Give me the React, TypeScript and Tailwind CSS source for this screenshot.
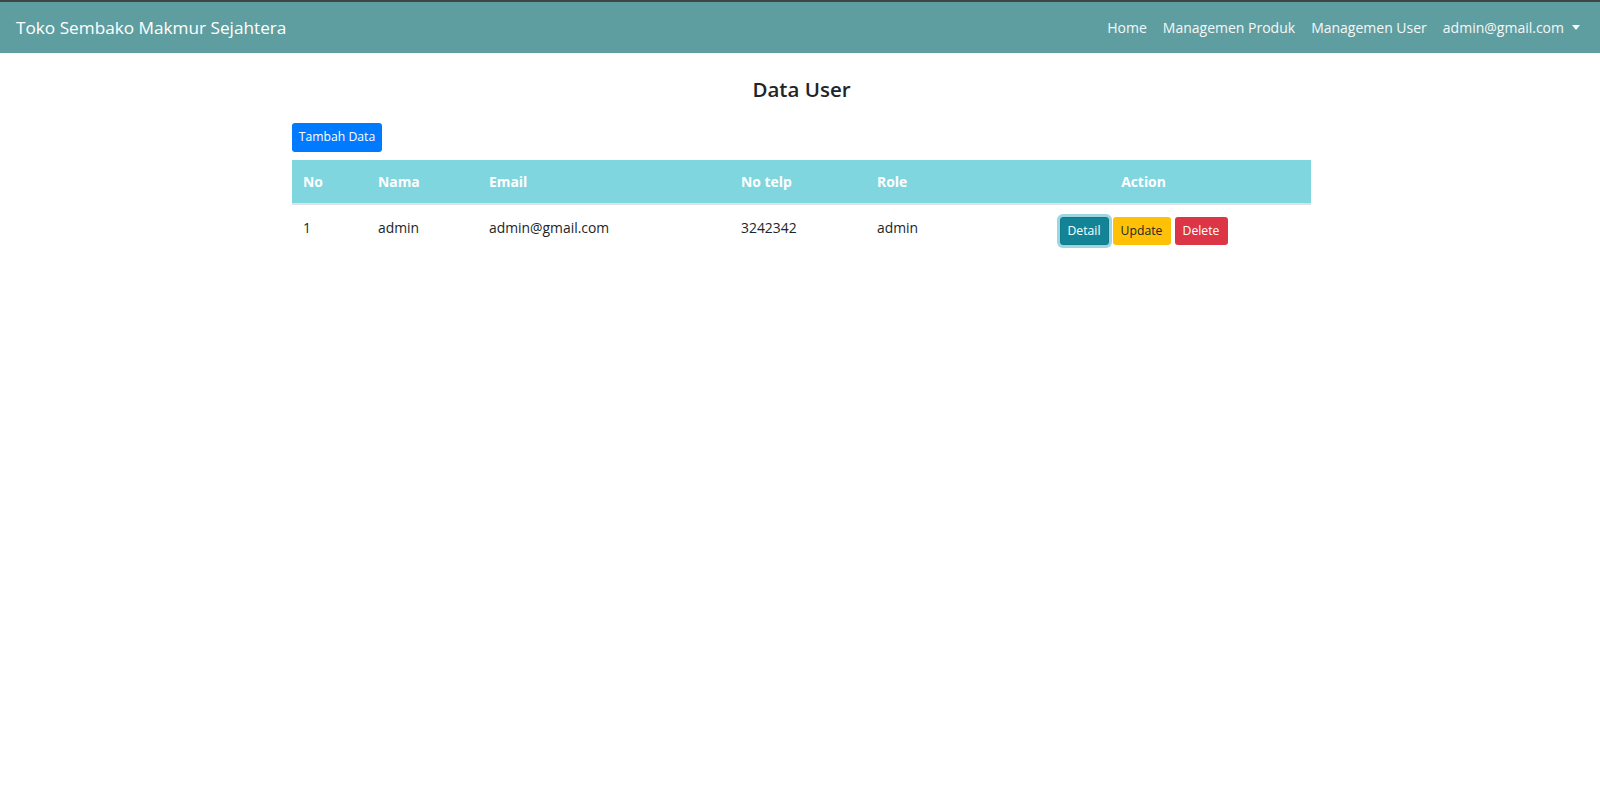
import React from "react";

export default function App() {
  const font = { fontFamily: '"Open Sans", "Noto Sans", sans-serif' };
  return (
    <div className="min-h-screen bg-white text-[#212529]" style={font}>
      <nav className="flex h-[53px] items-center justify-between border-t-2 border-[#3f4647] bg-[#5f9ea0] pl-[16px] pr-[20px]">
        <span className="text-[17.2px] leading-none text-white">Toko Sembako Makmur Sejahtera</span>
        <div className="flex items-center gap-[16px] text-[14px] text-[#f4f8f8]">
          <span>Home</span>
          <span>Managemen Produk</span>
          <span>Managemen User</span>
          <span className="flex items-center gap-[8px]">
            admin@gmail.com
            <span className="inline-block h-0 w-0 border-x-[4px] border-t-[5px] border-x-transparent border-t-[#f4f8f8]"></span>
          </span>
        </div>
      </nav>

      <main className="mx-auto w-[1022px] pl-[3px]">
        <h4 className="mt-[23px] text-center text-[20.5px] font-semibold leading-[26px] text-[#212529]">Data User</h4>

        <button className="mt-[21px] flex h-[29px] w-[90px] items-center justify-center rounded-[3px] bg-[#007bff] text-[12.2px] text-white">
          Tambah Data
        </button>

        <table className="mt-[8px] w-full border-collapse text-left text-[13.9px]">
          <thead>
            <tr className="h-[43px] bg-[#7fd6df] text-white">
              <th className="w-[75px] px-[11px] pt-[1px] font-bold">No</th>
              <th className="w-[111px] px-[11px] pt-[1px] font-bold">Nama</th>
              <th className="w-[252px] px-[11px] pt-[1px] font-bold">Email</th>
              <th className="w-[136px] px-[11px] pt-[1px] font-bold">No telp</th>
              <th className="w-[110px] px-[11px] pt-[1px] font-bold">Role</th>
              <th className="px-[11px] pt-[1px] text-center font-bold">Action</th>
            </tr>
            <tr>
              <td colSpan={6} className="h-[2px] bg-[#dee2e6] p-0"></td>
            </tr>
          </thead>
          <tbody>
            <tr>
              <td className="px-[11px] pt-[12px] pb-[9px] align-top leading-[22px]">1</td>
              <td className="px-[11px] pt-[12px] pb-[9px] align-top leading-[22px]">admin</td>
              <td className="px-[11px] pt-[12px] pb-[9px] align-top leading-[22px]">admin@gmail.com</td>
              <td className="px-[11px] pt-[12px] pb-[9px] align-top leading-[22px]">3242342</td>
              <td className="px-[11px] pt-[12px] pb-[9px] align-top leading-[22px]">admin</td>
              <td className="px-[11px] pt-[12px] pb-[10px] align-top">
                <div className="flex justify-center gap-[4px] text-[12.2px]">
                  <button className="flex h-[28px] w-[49px] items-center justify-center rounded-[3px] border border-[#117a8b] bg-[#138496] text-white shadow-[0_0_0_3px_rgba(58,176,195,0.5)]">
                    Detail
                  </button>
                  <button className="flex h-[28px] w-[58px] items-center justify-center rounded-[3px] bg-[#ffc107] text-[#212529]">
                    Update
                  </button>
                  <button className="flex h-[28px] w-[53px] items-center justify-center rounded-[3px] bg-[#dc3545] text-white">
                    Delete
                  </button>
                </div>
              </td>
            </tr>
          </tbody>
        </table>
      </main>
    </div>
  );
}
